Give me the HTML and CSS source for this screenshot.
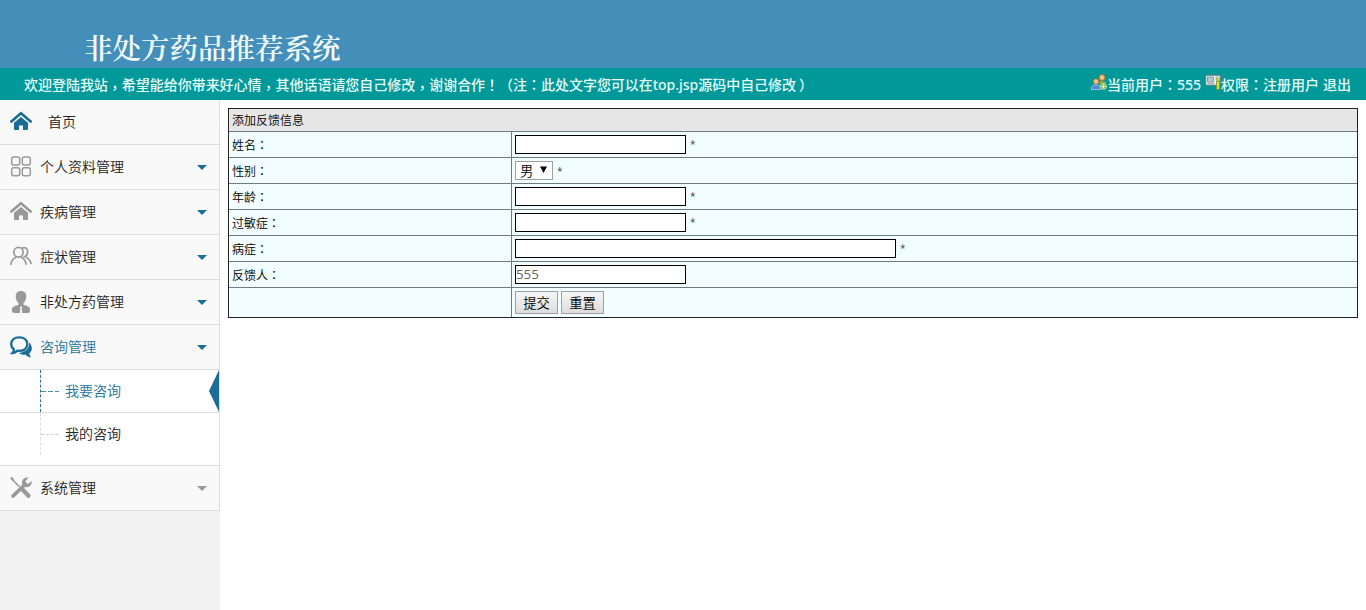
FILE: index.html
```
<!DOCTYPE html>
<html lang="zh-CN">
<head>
  <meta charset="UTF-8">
  <title>非处方药品推荐系统</title>
  <link rel="stylesheet" href="styles.css">
</head>
<body>
  <header class="banner"><h1>非处方药品推荐系统</h1></header>

  <div class="topbar">
    <div class="welcome">欢迎登陆我站<span class="mid comma" lang="zh-TW">，</span>希望能给你带来好心情<span class="mid comma" lang="zh-TW">，</span>其他话语请您自己修改<span class="mid comma" lang="zh-TW">，</span>谢谢合作<span class="mid" lang="zh-TW">！</span>（注<span class="mid" lang="zh-TW">：</span>此处文字您可以在<span class="latin">top.jsp</span>源码中自己修改<span class="close">）</span></div>
    <div class="user-info">
      <svg class="mini" viewBox="0 0 16 16">
        <circle cx="11" cy="3.500" r="3" fill="#efc083" stroke="#a8742e"/>
        <path d="M7.500 10V8q3-2.500 7.500 0v3z" fill="#7da64a"/>
        <circle cx="5" cy="7.500" r="2.800" fill="#efc083" stroke="#a86a3a"/>
        <path d="M.5 15.500v-2q1-2.800 4.500-2.800t4.500 2.800v2z" fill="#4e86d8" stroke="#d5e4ff" stroke-width=".6"/>
        <circle cx="12.500" cy="12.500" r="3" fill="#7cb83c" stroke="#e6f5b8" stroke-width=".7"/>
        <path d="M10.700 12.500h3.600M12.500 10.700v3.600" stroke="#fff"/>
      </svg><span>当前用户<span class="mid" lang="zh-TW">：</span><span class="latin">555</span></span>
      <svg class="mini gap" viewBox="0 0 16 16">
        <path d="M.7 1.200h14.600v10H.7z" fill="#eef2f4" stroke="#5e7c80"/>
        <path d="M2.500 3h6v5h-6z" fill="#b4c8d0" stroke="#71858a" stroke-width=".8"/>
        <path d="M2.500 9.700h7M10.500 3h3M10.500 5h3" stroke="#849397" stroke-width=".8"/>
        <path d="M11.500 7h3v8.500h-3z" fill="#d4e336" stroke="#75922b" stroke-width=".8"/>
        <circle cx="13" cy="5.500" r="1.600" fill="#d4e336" stroke="#75922b" stroke-width=".6"/>
      </svg><span>权限<span class="mid" lang="zh-TW">：</span>注册用户</span>
      <a href="#" class="logout">退出</a>
    </div>
  </div>

  <div class="page">
    <nav class="sidebar">
      <a class="item home" href="#">
        <svg class="icon blue" viewBox="0 0 22 22"><path d="M1.300 10.500 11 2.300l9.700 8.200" fill="none" stroke="currentColor" stroke-width="2.600" stroke-linecap="round"/><path d="M4 11.800 11 6l7 5.800V18q0 1-1 1h-4v-4.500H9V19H5q-1 0-1-1z" fill="currentColor"/></svg>
        <span>首页</span>
      </a>
      <a class="item" href="#">
        <svg class="icon" viewBox="0 0 22 22"><g fill="none" stroke="currentColor" stroke-width="1.500"><rect x="1.700" y="1" width="8" height="8" rx="2"/><rect x="12.300" y="1" width="8" height="8" rx="2"/><rect x="1.700" y="11.800" width="8" height="8" rx="2"/><rect x="12.300" y="11.800" width="8" height="8" rx="2"/></g></svg>
        <span>个人资料管理</span><i class="caret"></i>
      </a>
      <a class="item" href="#">
        <svg class="icon" viewBox="0 0 22 22"><path d="M1.300 10.500 11 2.300l9.700 8.200" fill="none" stroke="currentColor" stroke-width="2.600" stroke-linecap="round"/><path d="M4 11.800 11 6l7 5.800V18q0 1-1 1h-4v-4.500H9V19H5q-1 0-1-1z" fill="currentColor"/></svg>
        <span>疾病管理</span><i class="caret"></i>
      </a>
      <a class="item" href="#">
        <svg class="icon" viewBox="0 0 22 22"><g fill="none" stroke="currentColor" stroke-width="1.700"><ellipse cx="8.500" cy="6.300" rx="4.700" ry="4.900"/><path d="M.8 19q.4-6 5.500-7.800M10.700 11.200q5 1.800 5.500 7.600M11.500 2.200q5.500-2 6.200 3 .2 3.700-3 5.500 5.500 1.700 6.500 7.500"/></g></svg>
        <span>症状管理</span><i class="caret"></i>
      </a>
      <a class="item" href="#">
        <svg class="icon" viewBox="0 0 22 22"><path d="M11 0C7.500 0 5.500 2.300 5.700 5.800c.2 3 1.300 5 2.800 6.200v1.800C5 15 2 15.500 2 18.500V20q0 2 2 2h14q2 0 2-2v-1.500c0-3-3-3.500-6.500-4.700V12c1.500-1.200 2.600-3.200 2.800-6.200C16.500 2.300 14.500 0 11 0z" fill="currentColor"/><path d="m11 15-1.200 1.500.6 1-.7 4.500h2.600l-.7-4.500.6-1z" fill="#f9f9f9"/></svg>
        <span>非处方药管理</span><i class="caret"></i>
      </a>
      <a class="item open" href="#">
        <svg class="icon blue" viewBox="0 0 22 22"><path fill="none" stroke="currentColor" stroke-width="2.300" d="M9.300 1.300c4.700 0 8 2.800 8 6.800s-3.300 6.800-8 6.800q-1 0-2-.2-1.800 2.100-4.800 2.300 1.800-1.800 1.300-3.800C2 12 1.200 10.200 1.200 8.100c0-4 3.300-6.800 8.100-6.800z"/><path d="M19 6.500c3.600 3 3.800 8 .4 10.700 0 1.500.6 2.700 1.800 4.300-2.500-.2-4.400-1.200-5.500-2.700-3 .3-5.600-.5-7.200-2C15 16.500 19.500 12.500 19 6.500z" fill="currentColor"/></svg>
        <span>咨询管理</span><i class="caret"></i>
      </a>
      <ul class="submenu">
        <li class="active"><a href="#">我要咨询</a></li>
        <li><a href="#">我的咨询</a></li>
      </ul>
      <a class="item" href="#">
        <svg class="icon" viewBox="0 0 22 22"><path d="m1.500 1.800 8 8" stroke="currentColor" stroke-width="1.600"/><path d="m12.500 12.500 6 6.300" stroke="currentColor" stroke-width="4.300" stroke-linecap="round"/><path d="m3 19 11-10.500" stroke="currentColor" stroke-width="3.800" stroke-linecap="round"/><path d="m0 .8 2-1 2.600 3.400L3.300 4.500zM18.500.8l-3 3.100.8 2.200 2.300.6 2.900-3c1 3.700-1.500 6.600-5 6.500-3.400 0-5.400-3-4.300-6.100C13 1.500 15.700 0 18.500.8z" fill="currentColor"/></svg>
        <span>系统管理</span><i class="caret grey"></i>
      </a>
    </nav>

    <main>
      <form>
        <table class="feedback">
          <colgroup><col class="label-col"><col></colgroup>
          <tr class="head"><td colspan="2">添加反馈信息</td></tr>
          <tr><td>姓名<span class="mid" lang="zh-TW">：</span></td><td><div class="field"><input type="text"><span>*</span></div></td></tr>
          <tr><td>性别<span class="mid" lang="zh-TW">：</span></td><td><div class="field"><div class="select"><select><option>男</option><option>女</option></select><svg viewBox="0 0 7 7"><path d="M0 .5h7L3.500 7z"/></svg></div><span class="low">*</span></div></td></tr>
          <tr><td>年龄<span class="mid" lang="zh-TW">：</span></td><td><div class="field"><input type="text"><span>*</span></div></td></tr>
          <tr><td>过敏症<span class="mid" lang="zh-TW">：</span></td><td><div class="field"><input type="text"><span>*</span></div></td></tr>
          <tr><td>病症<span class="mid" lang="zh-TW">：</span></td><td><div class="field"><input type="text" class="wide"><span>*</span></div></td></tr>
          <tr><td>反馈人<span class="mid" lang="zh-TW">：</span></td><td><div class="field"><input type="text" value="555"></div></td></tr>
          <tr class="actions"><td></td><td><div class="field"><button type="button">提交</button><button type="reset">重置</button></div></td></tr>
        </table>
      </form>
    </main>
  </div>
</body>
</html>
```
FILE: styles.css
```
* {
  box-sizing: border-box;
}
body {
  margin: 0;
  height: 610px;
  overflow: hidden;
  display: flex;
  flex-direction: column;
  font-family: "Noto Sans CJK SC", sans-serif;
  font-size: 14px;
  line-height: 20px;
  color: #222;
  background: #fff;
}
a {
  color: inherit;
  text-decoration: none;
}
/* full-width punctuation sits in the middle of its box */
.mid {
  font-family: "Noto Sans CJK TC", sans-serif;
}
.comma {
  position: relative;
  top: 3px;
}
.latin {
  font-family: "Noto Sans", sans-serif;
}
.close {
  margin-left: 3px;
}
.banner {
  height: 68px;
  flex: none;
  padding: 26px 0 0 84px;
  background: #438fb9;
}
.banner h1 {
  margin: 0;
  font-family: "Noto Serif CJK SC", "Noto Sans CJK SC", serif;
  font-size: 28.5px;
  font-weight: 600;
  line-height: 41px;
  color: #f3fbff;
}
.topbar {
  height: 32px;
  flex: none;
  display: flex;
  justify-content: space-between;
  align-items: center;
  padding: 0 15px 0 24px;
  background: #009899;
  color: #e4fbfb;
  font-weight: 500;
  white-space: nowrap;
}
.welcome {
  letter-spacing: -0.03px;
}
.user-info {
  display: flex;
  align-items: center;
}
.mini {
  width: 16px;
  height: 16px;
  margin-bottom: 4px;
}
.gap {
  margin-left: 4px;
}
.logout {
  margin-left: 4px;
}
.page {
  display: flex;
  flex: 1;
}
.sidebar {
  width: 220px;
  background: #f2f2f2;
}
.item {
  display: flex;
  align-items: center;
  height: 45px;
  padding: 0 12px 0 10px;
  background: #f9f9f9;
  border-bottom: 1px solid #ddd;
  border-right: 1px solid #ddd;
  font-weight: 350;
}
.item span {
  margin-left: 8px;
  padding-bottom: 2px;
}
.home span {
  margin-left: 16px;
}
.icon {
  width: 22px;
  height: 22px;
  color: #999;
}
.blue {
  color: #196d97;
}
.open {
  color: #23739d;
}
.caret {
  margin-left: auto;
  border: 5px solid transparent;
  border-top-color: #196d97;
  border-bottom: 0;
}
.grey {
  border-top-color: #999;
}
.submenu {
  margin: 0;
  padding: 0 0 10px;
  height: 96px;
  list-style: none;
  background: #fff;
  border-bottom: 1px solid #ddd;
  border-right: 1px solid #ddd;
  font-weight: 350;
}
.submenu li {
  display: flex;
  align-items: center;
  height: 42px;
  margin-left: 40px;
  border-left: 1px dashed #ddd;
}
.submenu a {
  padding-bottom: 2px;
}
.submenu li::before {
  content: "";
  width: 17px;
  margin-right: 7px;
  border-top: 1px dashed #ccc;
}
.submenu .active {
  height: 43px;
  margin-left: 0;
  padding-left: 40px;
  border-left: 0;
  border-bottom: 1px solid #ddd;
  color: #23739d;
}
.submenu .active::before {
  width: 18px;
  height: 42px;
  margin-right: 6px;
  border-top: 0;
  border-left: 1px dashed #23739d;
  background: repeating-linear-gradient(90deg, #4c8cab 0 5px, #fff 5px 7px) 0 21px / 100% 1px no-repeat;
}
.submenu .active::after {
  content: "";
  margin-left: auto;
  border: 21px solid transparent;
  border-left: 0;
  border-right: 10px solid #196d97;
}
main {
  flex: 1;
  padding: 8px;
}
.feedback {
  width: 1130px;
  table-layout: fixed;
  border-collapse: collapse;
  outline: 1px solid #222;
  outline-offset: -1px;
  background: #f1fdff;
  font-size: 12px;
  font-weight: 350;
  line-height: 18px;
  color: #000;
}
.label-col {
  width: 283px;
}
.feedback td {
  height: 26px;
  padding: 0 3px;
  border: 1px solid #6e7b80;
}
.feedback tr.head td {
  height: 23px;
  padding-bottom: 1px;
  background: #e6e6e6;
}
.feedback tr.actions td {
  height: 30px;
}
.field {
  display: flex;
  align-items: center;
}
.field span {
  margin-left: 4px;
  padding-bottom: 2px;
  font-family: "Noto Sans", sans-serif;
  font-size: 10px;
}
.field .low {
  padding-bottom: 0;
}
input {
  width: 171px;
  height: 19px;
  padding: 0 1px 1px 0;
  border: 1px solid #000;
  background: #fff;
  font: 13.33px "Open Sans", sans-serif;
  color: #666;
}
.wide {
  width: 381px;
}
.select {
  display: flex;
  width: 38px;
  height: 19px;
  align-items: center;
  border: 1px solid #a0a0a0;
  background: #fff;
}
select {
  width: 24px;
  height: 17px;
  padding: 0 0 0 4px;
  border: 0;
  appearance: none;
  background: none;
  font: 350 13.33px/17px "Noto Sans CJK SC", sans-serif;
  color: #000;
}
.select svg {
  width: 7px;
  height: 7px;
  margin-bottom: 2px;
}
button {
  width: 43px;
  height: 23px;
  padding: 0;
  margin-right: 3px;
  border: 1px solid #a0a0a0;
  background: linear-gradient(#f6f6f6, #ddd);
  font: 350 13.33px/20px "Noto Sans CJK SC", sans-serif;
  color: #000;
}
```
